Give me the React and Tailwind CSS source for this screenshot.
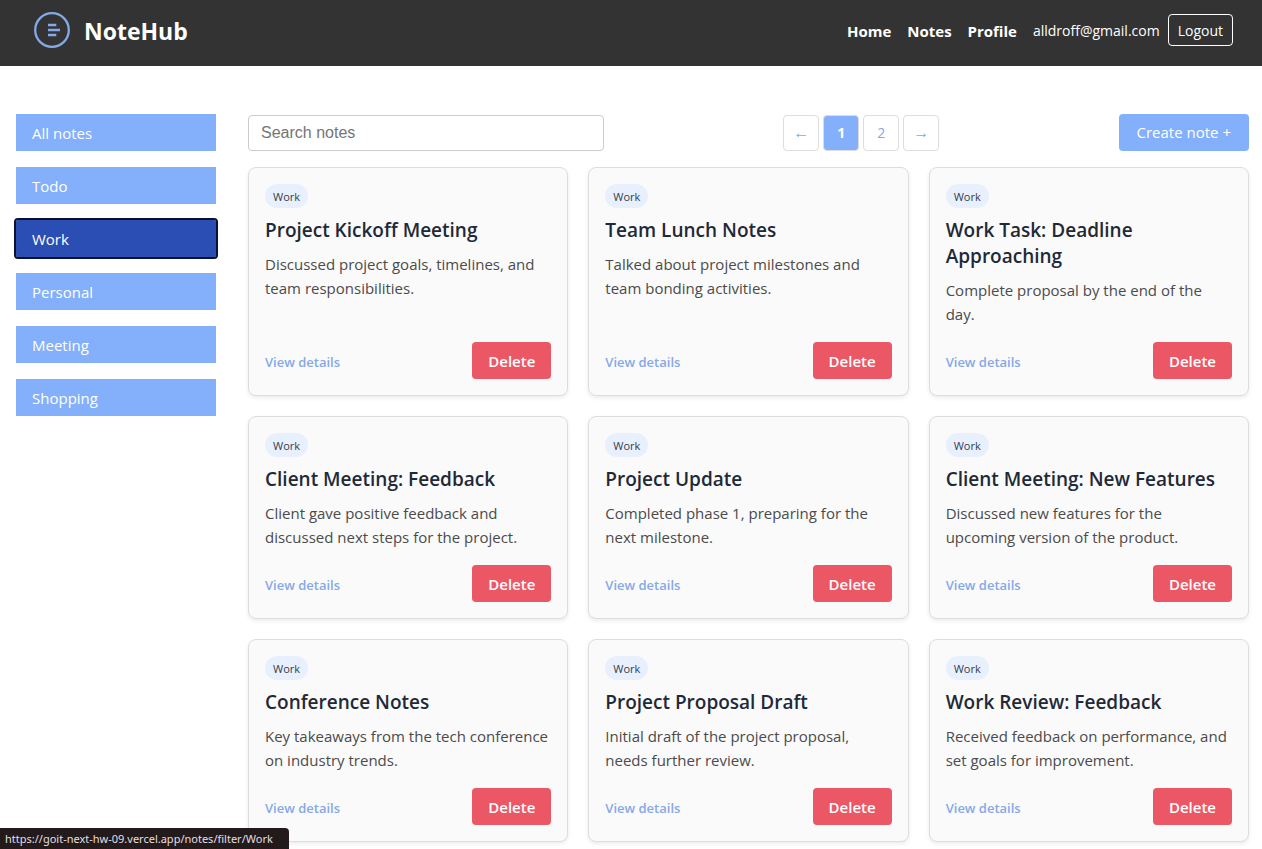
import React, { useState } from 'react';
import clsx from 'clsx';

const TAGS = ['All notes', 'Todo', 'Work', 'Personal', 'Meeting', 'Shopping'];

const NOTES = [
  { id: 1, title: 'Project Kickoff Meeting', content: 'Discussed project goals, timelines, and team responsibilities.' },
  { id: 2, title: 'Team Lunch Notes', content: 'Talked about project milestones and team bonding activities.' },
  { id: 3, title: 'Work Task: Deadline Approaching', content: 'Complete proposal by the end of the day.' },
  { id: 4, title: 'Client Meeting: Feedback', content: 'Client gave positive feedback and discussed next steps for the project.' },
  { id: 5, title: 'Project Update', content: 'Completed phase 1, preparing for the next milestone.' },
  { id: 6, title: 'Client Meeting: New Features', content: 'Discussed new features for the upcoming version of the product.' },
  { id: 7, title: 'Conference Notes', content: 'Key takeaways from the tech conference on industry trends.' },
  { id: 8, title: 'Project Proposal Draft', content: 'Initial draft of the project proposal, needs further review.' },
  { id: 9, title: 'Work Review: Feedback', content: 'Received feedback on performance, and set goals for improvement.' },
];

function Logo() {
  return (
    <svg width="36" height="36" viewBox="0 0 36 36" fill="none" stroke="#84a9e8" strokeWidth="2.3" aria-hidden="true">
      <circle cx="18" cy="18" r="16.8" />
      <path d="M14 13h8.3M14 18h12M14 23h8.3" />
    </svg>
  );
}

function Header() {
  return (
    <header className="flex h-[66px] items-center justify-between bg-[#333333] pl-[34px] pr-[29px] pb-1.5 text-white">
      <a href="#home" className="flex items-center gap-3.5">
        <Logo />
        <span className="pt-0.5 text-[23px] leading-7 font-bold">NoteHub</span>
      </a>
      <nav className="flex items-center gap-4 text-[15px] font-bold">
        <a href="#home" className="pt-0.5">Home</a>
        <a href="#notes" className="pt-0.5">Notes</a>
        <a href="#profile" className="pt-0.5">Profile</a>
        <div className="flex items-center gap-2 text-sm font-normal">
          <span className="pt-0.5">alldroff@gmail.com</span>
          <button type="button" className="h-8 rounded border border-white px-[9px] pt-0.5">
            Logout
          </button>
        </div>
      </nav>
    </header>
  );
}

function Sidebar({ active, onSelect }) {
  return (
    <aside className="w-[200px] shrink-0">
      <ul className="flex flex-col gap-4">
        {TAGS.map((tag) => (
          <li key={tag}>
            <a
              href={`#${tag}`}
              onClick={() => onSelect(tag)}
              className={clsx(
                'block h-[37px] px-4 pt-px text-[15px] leading-9 text-white',
                tag === active
                  ? 'rounded-xs bg-[#2b4eb5] outline-2 outline-[#0b1230]'
                  : 'bg-[#84affb]'
              )}
            >
              {tag}
            </a>
          </li>
        ))}
      </ul>
    </aside>
  );
}

function Pagination({ page, onChange }) {
  const base = 'size-9 rounded border';
  const idle = 'border-[#dddddd] bg-white text-[#84a9e8]';
  const arrow = "font-['Liberation_Sans',sans-serif] text-base";

  return (
    <div className="flex gap-1">
      <button type="button" aria-label="Previous page" onClick={() => onChange(1)} className={clsx(base, idle, arrow)}>
        ←
      </button>
      {[1, 2].map((n) => (
        <button
          key={n}
          type="button"
          onClick={() => onChange(n)}
          className={clsx(base, 'text-sm', n === page ? 'border-[#dddddd] bg-[#84affb] font-bold text-white' : idle)}
        >
          {n}
        </button>
      ))}
      <button type="button" aria-label="Next page" onClick={() => onChange(2)} className={clsx(base, idle, arrow)}>
        →
      </button>
    </div>
  );
}

function NoteCard({ note }) {
  return (
    <li className="flex flex-col rounded-lg border border-[#dddddd] bg-[#fafafa] p-4 shadow-[0_2px_4px_rgba(0,0,0,0.08)]">
      <span className="h-6 self-start rounded-full bg-[#e8f0fe] px-2 pt-px text-[11px] leading-6 text-[#333d4d]">Work</span>
      <h2 className="mt-[9px] text-[19px] leading-[26px] font-semibold text-[#1f2937]">{note.title}</h2>
      <p className="mt-[9px] text-[15px] leading-6 text-[#4b4b4b]">{note.content}</p>
      <div className="mt-auto flex items-center justify-between pt-4">
        <a href={`#note-${note.id}`} className="pt-0.5 text-[13px] leading-5 font-semibold text-[#84a9e8]">
          View details
        </a>
        <button type="button" className="h-[37px] rounded bg-[#ec5766] px-4 pt-px text-[15px] font-semibold text-white">
          Delete
        </button>
      </div>
    </li>
  );
}

export default function App() {
  const [tag, setTag] = useState('Work');
  const [page, setPage] = useState(1);

  return (
    <div className="min-h-screen bg-white font-['Open_Sans','Noto_Sans',sans-serif]">
      <Header />

      <div className="flex gap-8 pt-12 pr-[13px] pl-4">
        <Sidebar active={tag} onSelect={setTag} />

        <main className="min-w-0 flex-1">
          {/* Toolbar */}
          <div className="mb-4 flex items-center justify-between">
            <input
              type="text"
              aria-label="Search notes"
              placeholder="Search notes"
              className="h-9 w-[356px] rounded border border-[#cccccc] px-3 font-['Liberation_Sans',sans-serif] text-base placeholder:text-[#757575]"
            />
            <Pagination page={page} onChange={setPage} />
            <button type="button" className="h-[37px] rounded bg-[#84affb] px-[18px] text-[15px] text-white">
              Create note +
            </button>
          </div>

          {/* Notes */}
          <ul className="grid grid-cols-3 gap-5">
            {NOTES.map((note) => (
              <NoteCard key={note.id} note={note} />
            ))}
          </ul>
        </main>
      </div>

      {/* Link preview */}
      <div className="fixed bottom-0 left-0 rounded-tr bg-[#231a1c] pr-4 pl-[5px] font-['Noto_Sans',sans-serif] text-[11px] leading-[21px] text-[#e6dfe1]">
        https://goit-next-hw-09.vercel.app/notes/filter/Work
      </div>
    </div>
  );
}
